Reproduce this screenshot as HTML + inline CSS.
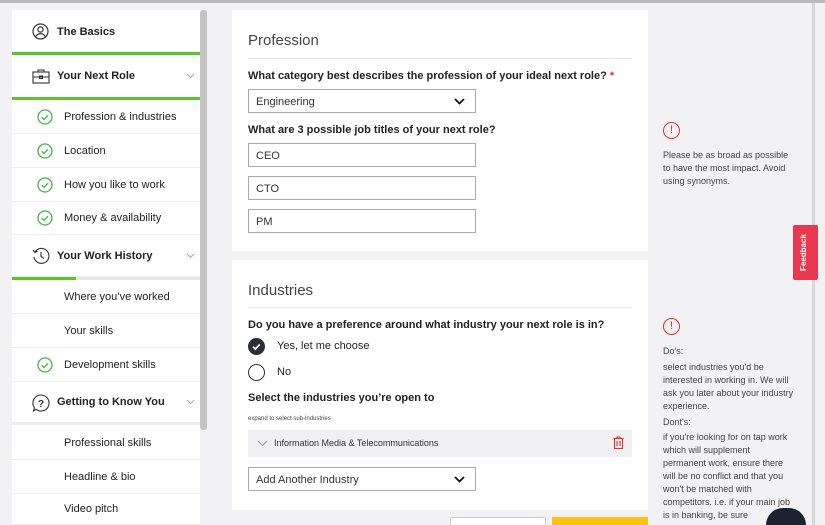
<!DOCTYPE html>
<html style="overflow:hidden;width:825px;height:525px"><head><style>
*{margin:0;padding:0;box-sizing:border-box}
body{width:825px;height:525px;overflow:hidden;background:#f2f2f4;font-family:"Liberation Sans",sans-serif;color:#222;position:relative}
.a{position:absolute}
.sb{left:12px;top:10px;width:188px;height:515px;background:#fff}
.row{position:absolute;left:12px;width:188px;border-bottom:1px solid #eee;font-size:11px;color:#222}
.row span{position:absolute;top:50%;transform:translateY(-50%)}
.chev{position:absolute;left:174px;top:50%;margin-top:-3px}
.card{background:#fff;left:232px;width:416px}
.h{font-size:15px;color:#444;left:248px}
.hr{left:248px;width:384px;height:1px;background:#eaeaea}
.q{font-size:11px;font-weight:bold;left:248px;color:#222}
.in{left:248px;width:228px;height:24px;border:1px solid #aaa;font-size:11px;padding:6px 7px;color:#333;background:#fff}
.in svg{position:absolute;left:205px;top:8px}
.tip{font-size:9px;color:#444;line-height:13px;left:663px;width:132px}
</style></head><body>
<div class="a" style="left:0;top:0;width:825px;height:3px;background:#bbb"></div>
<div class="a sb"></div>
<div class="a" style="left:200px;top:10px;width:7px;height:420px;background:#c4c4c4;border-radius:3px"></div>

<div class="row" style="top:12px;height:40px;font-weight:bold"><svg class="a" style="left:20px;top:11px" width="17" height="17" viewBox="0 0 17 17" fill="none" stroke="#333" stroke-width="1.2"><circle cx="8.5" cy="8.5" r="7.5"/><circle cx="8.5" cy="6.5" r="2.6"/><path d="M3.7 13.6c1-2 2.8-3 4.8-3s3.8 1 4.8 3"/></svg><span style="left:45px">The Basics</span></div>
<div class="a" style="left:12px;top:52px;width:188px;height:3px;background:#5ec22a"></div>
<div class="row" style="top:55px;height:43px;font-weight:bold"><svg class="a" style="left:20px;top:14px" width="18" height="15" viewBox="0 0 18 15" fill="none" stroke="#333" stroke-width="1.1"><rect x="1" y="3" width="16" height="11"/><path d="M6 3V1h6v2M1 8h16"/><rect x="7.5" y="7" width="3" height="2.5"/></svg><span style="left:45px">Your Next Role</span><svg class="chev" width="9" height="6" viewBox="0 0 9 6"><path d="M1 1l3.5 3.5L8 1" stroke="#aaa" fill="none"/></svg></div>
<div class="a" style="left:12px;top:97px;width:188px;height:3px;background:#5ec22a"></div>

<div class="row" style="top:100px;height:34px"><svg class="a" style="left:25px;top:9px" width="16" height="16" viewBox="0 0 16 16" fill="none" stroke="#4caf50" stroke-width="1.3"><circle cx="8" cy="8" r="7"/><path d="M4.8 8.2l2.2 2.2 4-4.2"/></svg><span style="left:52px">Profession &amp; industries</span></div>
<div class="row" style="top:134px;height:34px"><svg class="a" style="left:25px;top:9px" width="16" height="16" viewBox="0 0 16 16" fill="none" stroke="#4caf50" stroke-width="1.3"><circle cx="8" cy="8" r="7"/><path d="M4.8 8.2l2.2 2.2 4-4.2"/></svg><span style="left:52px">Location</span></div>
<div class="row" style="top:168px;height:34px"><svg class="a" style="left:25px;top:9px" width="16" height="16" viewBox="0 0 16 16" fill="none" stroke="#4caf50" stroke-width="1.3"><circle cx="8" cy="8" r="7"/><path d="M4.8 8.2l2.2 2.2 4-4.2"/></svg><span style="left:52px">How you like to work</span></div>
<div class="row" style="top:202px;height:33px"><svg class="a" style="left:25px;top:8px" width="16" height="16" viewBox="0 0 16 16" fill="none" stroke="#4caf50" stroke-width="1.3"><circle cx="8" cy="8" r="7"/><path d="M4.8 8.2l2.2 2.2 4-4.2"/></svg><span style="left:52px">Money &amp; availability</span></div>
<div class="row" style="top:235px;height:42px;font-weight:bold"><svg class="a" style="left:20px;top:12px" width="18" height="18" viewBox="0 0 18 18" fill="none" stroke="#333" stroke-width="1.1"><path d="M3 5A7.5 7.5 0 1 1 2 10"/><path d="M1 3l2 2.5 2.5-1.5"/><path d="M9 5v4.5l3 2"/></svg><span style="left:45px">Your Work History</span><svg class="chev" width="9" height="6" viewBox="0 0 9 6"><path d="M1 1l3.5 3.5L8 1" stroke="#aaa" fill="none"/></svg></div>
<div class="a" style="left:12px;top:277px;width:188px;height:3px;background:#e8e8e8"></div>
<div class="a" style="left:12px;top:277px;width:64px;height:3px;background:#5ec22a"></div>
<div class="row" style="top:280px;height:34px"><span style="left:52px">Where you’ve worked</span></div>
<div class="row" style="top:314px;height:34px"><span style="left:52px">Your skills</span></div>
<div class="row" style="top:348px;height:34px"><svg class="a" style="left:25px;top:9px" width="16" height="16" viewBox="0 0 16 16" fill="none" stroke="#4caf50" stroke-width="1.3"><circle cx="8" cy="8" r="7"/><path d="M4.8 8.2l2.2 2.2 4-4.2"/></svg><span style="left:52px">Development skills</span></div>
<div class="row" style="top:382px;height:43px;font-weight:bold;border-bottom:3px solid #eee"><svg class="a" style="left:20px;top:12px" width="18" height="18" viewBox="0 0 18 18" fill="none" stroke="#333" stroke-width="1.1"><path d="M9 1a8 8 0 1 1-5 14.2L1.5 17l.8-3.5A8 8 0 0 1 9 1z"/><text x="9" y="13" font-size="10" text-anchor="middle" fill="#333" stroke="none" font-family="Liberation Sans">?</text></svg><span style="left:45px">Getting to Know You</span><svg class="chev" width="9" height="6" viewBox="0 0 9 6"><path d="M1 1l3.5 3.5L8 1" stroke="#aaa" fill="none"/></svg></div>
<div class="row" style="top:426px;height:34px"><span style="left:52px">Professional skills</span></div>
<div class="row" style="top:460px;height:34px"><span style="left:52px">Headline &amp; bio</span></div>
<div class="row" style="top:494px;height:31px"><span style="left:52px">Video pitch</span></div>

<!-- card 1 -->
<div class="a card" style="top:10px;height:241px"></div>
<div class="a h" style="top:32px">Profession</div>
<div class="a hr" style="top:58px"></div>
<div class="a q" style="top:70px">What category best describes the profession of your ideal next role? <span style="color:#e03030">*</span></div>
<div class="a in" style="top:89px">Engineering<svg width="11" height="7" viewBox="0 0 11 7"><path d="M1 1l4.5 4.5L10 1" stroke="#111" stroke-width="1.8" fill="none"/></svg></div>
<div class="a q" style="top:124px">What are 3 possible job titles of your next role?</div>
<div class="a in" style="top:143px">CEO</div>
<div class="a in" style="top:176px">CTO</div>
<div class="a in" style="top:209px">PM</div>

<!-- card 2 -->
<div class="a card" style="top:260px;height:250px"></div>
<div class="a h" style="top:282px">Industries</div>
<div class="a hr" style="top:307px"></div>
<div class="a q" style="top:319px">Do you have a preference around what industry your next role is in?</div>
<svg class="a" style="left:248px;top:338px" width="17" height="17" viewBox="0 0 17 17"><circle cx="8.5" cy="8.5" r="8.5" fill="#2a2e36"/><path d="M5 8.7l2.4 2.3 4.4-4.6" stroke="#fff" stroke-width="1.8" fill="none"/></svg>
<div class="a" style="left:277px;top:340px;font-size:11px">Yes, let me choose</div>
<div class="a" style="left:248px;top:364px;width:17px;height:17px;border:1px solid #333;border-radius:50%"></div>
<div class="a" style="left:277px;top:366px;font-size:11px">No</div>
<div class="a q" style="top:392px">Select the industries you’re open to</div>
<div class="a" style="left:248px;top:416px;font-size:6px;color:#444">expand to select sub-industries</div>
<div class="a" style="left:248px;top:430px;width:384px;height:27px;background:#f0f0f2"></div>
<svg class="a" style="left:257px;top:440px" width="11" height="7" viewBox="0 0 11 7"><path d="M1 1l4.5 4.5L10 1" stroke="#999" fill="none"/></svg>
<div class="a" style="left:274px;top:438px;font-size:9px;color:#333">Information Media &amp; Telecommunications</div>
<svg class="a" style="left:613px;top:436px" width="11" height="13" viewBox="0 0 11 13" fill="none" stroke="#e03030" stroke-width="1.1"><path d="M0.5 2.5h10M4 2.5V1h3v1.5"/><rect x="1.5" y="2.5" width="8" height="10"/><path d="M4 5v5M7 5v5"/></svg>
<div class="a in" style="top:467px">Add Another Industry<svg width="11" height="7" viewBox="0 0 11 7"><path d="M1 1l4.5 4.5L10 1" stroke="#111" stroke-width="1.8" fill="none"/></svg></div>

<div class="a" style="left:450px;top:517px;width:96px;height:8px;background:#fff;border:1px solid #ccc;border-bottom:none;border-radius:2px 2px 0 0"></div>
<div class="a" style="left:552px;top:517px;width:96px;height:8px;background:#ffc20e"></div>

<!-- right panel -->
<div class="a" style="left:812px;top:3px;width:3px;height:522px;background:#d8d8da"></div>
<div class="a" style="left:663px;top:122px;width:17px;height:17px;border:1.5px solid #e03030;border-radius:50%;color:#e03030;font-size:11px;text-align:center;line-height:14px">!</div>
<div class="a tip" style="top:149px">Please be as broad as possible to have the most impact. Avoid using synonyms.</div>
<div class="a" style="left:793px;top:225px;width:25px;height:55px;background:#e8384f;border-radius:2px"></div>
<div class="a" style="left:799px;top:230px;height:45px;font-size:8px;color:#fff;writing-mode:vertical-rl;transform:rotate(180deg);font-weight:bold;text-align:center">Feedback</div>
<div class="a" style="left:663px;top:318px;width:17px;height:17px;border:1.5px solid #e03030;border-radius:50%;color:#e03030;font-size:11px;text-align:center;line-height:14px">!</div>
<div class="a tip" style="top:345px;line-height:12.9px">Do's:<br><span style="display:block;margin-top:3px">select industries you'd be interested in working in. We will ask you later about your industry experience.</span><span style="display:block;margin-top:3px">Dont's:</span><span style="display:block;margin-top:3px">if you're looking for on tap work which will supplement permanent work, ensure there will be no conflict and that you won't be matched with competitors. i.e. if your main job is in banking, be sure</span></div>
<div class="a" style="left:766px;top:508px;width:40px;height:17px;border-radius:20px 20px 0 0;background:#1c2230"></div>
</body></html>
